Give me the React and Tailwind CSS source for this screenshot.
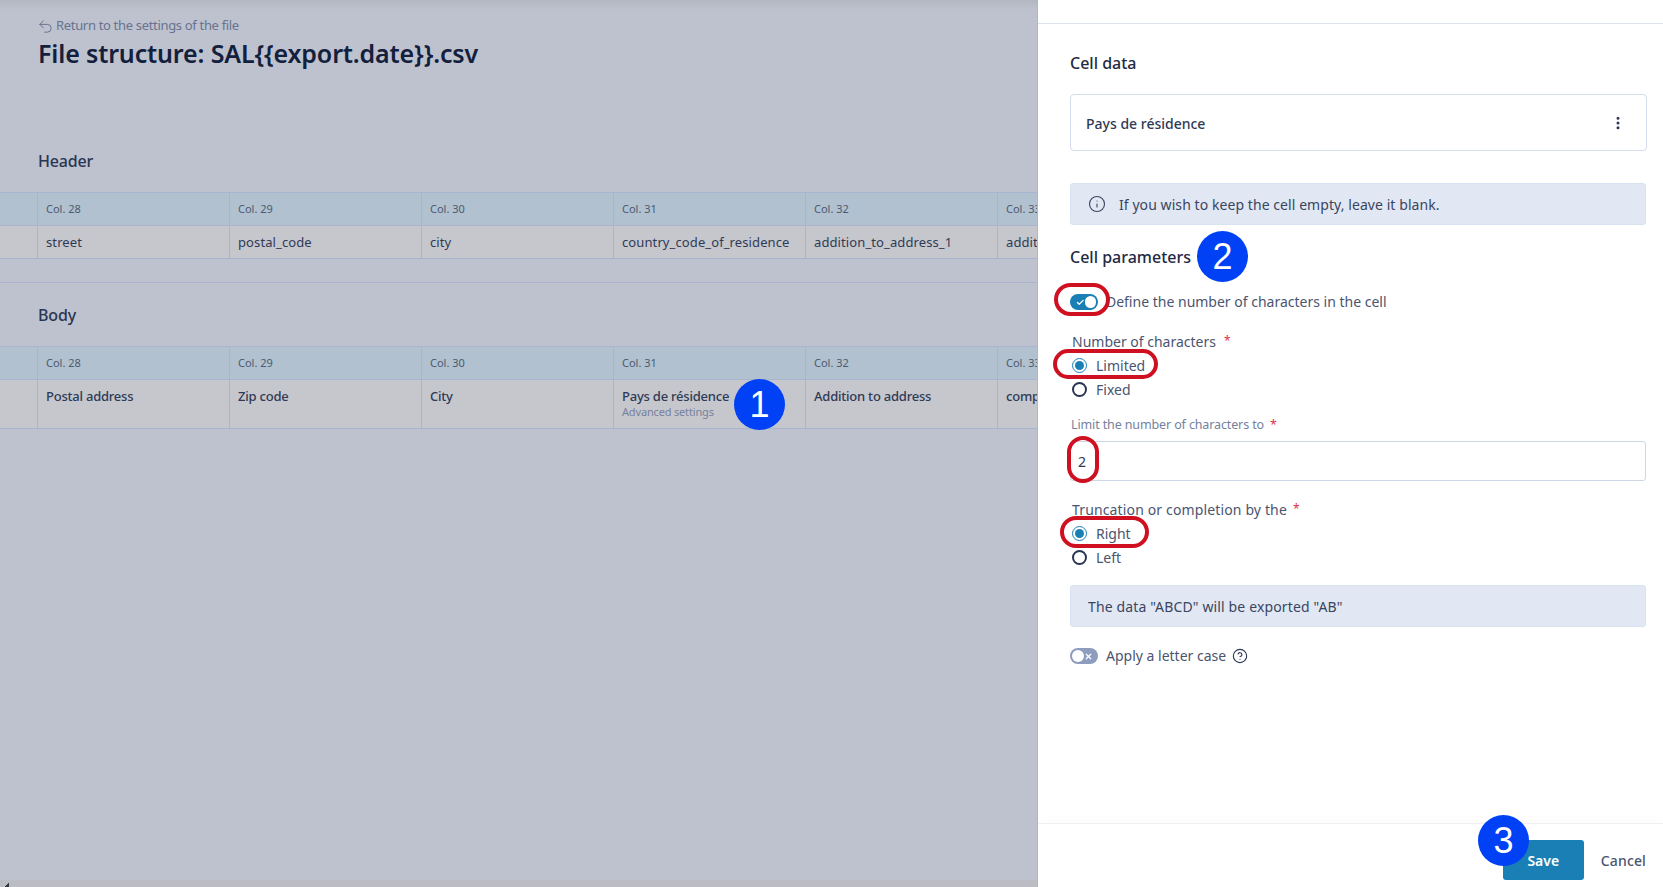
import React from "react";
import { Undo2, Info, EllipsisVertical, CircleHelp, Check, X } from "lucide-react";

const cols = ["Col. 28", "Col. 29", "Col. 30", "Col. 31", "Col. 32", "Col. 33"];

function Marker({ n, className }) {
  return (
    <div className={`absolute z-20 flex h-[51px] w-[51px] items-center justify-center rounded-full bg-[#0041f5] font-['Liberation_Sans'] text-[36px] leading-none text-white ${className}`}>
      {n}
    </div>
  );
}

function Ring({ className }) {
  return <div className={`absolute z-10 rounded-full border-[4px] border-[#cf1020] ${className}`} />;
}

function Table({ cells, tall }) {
  return (
    <div className="grid grid-cols-[37px_repeat(6,192px)] overflow-hidden">
      <div className="h-[34px] border-y border-[#a9b5cf] bg-[#b1c1cf]" />
      {cols.map((c) => (
        <div key={c} className="flex h-[34px] items-center border-y border-l border-[#a9b5cf] bg-[#b1c1cf] pl-[8px] text-[11px] whitespace-nowrap text-[#4d5a70]">
          {c}
        </div>
      ))}
      <div className={`${tall ? "h-[49px]" : "h-[33px]"} border-b border-[#a9b5cf] bg-[#c6c7cd]`} />
      {cells.map((c, i) => (
        <div key={i} className={`${tall ? "h-[49px] pt-[7px] font-medium tracking-[-0.017em]" : "flex h-[33px] items-center pt-[1px] tracking-[0.008em]"} overflow-hidden border-b border-l border-[#a9b5cf] bg-[#c6c7cd] pl-[8px] text-[13px] whitespace-nowrap text-[#2f3a55]`}>
          <div className={tall ? "leading-[18px]" : ""}>{c.a}</div>
          {c.b && <div className="text-[11px] leading-[13px] font-normal tracking-[-0.015em] text-[#76819d]">{c.b}</div>}
        </div>
      ))}
    </div>
  );
}

function Radio({ label, on }) {
  return (
    <div className="flex h-[24px] items-center gap-[9px] text-[14px] text-[#4a5570]">
      <div className="ml-[2px]">
        {on ? (
          <div className="flex h-[15px] w-[15px] items-center justify-center rounded-full border-[1.5px] border-[#1a7fb5]">
            <div className="h-[9px] w-[9px] rounded-full bg-[#1a7fb5]" />
          </div>
        ) : (
          <div className="h-[15px] w-[15px] rounded-full border-[2px] border-[#2a3553]" />
        )}
      </div>
      <span>{label}</span>
    </div>
  );
}

function Req({ label, ml, wide }) {
  return (
    <div className={`flex h-[20px] -translate-y-px items-center pl-[2px] text-[14px] text-[#4a5570] ${wide ? "tracking-[0.01em]" : ""}`}>
      <span>{label}</span>
      <span className={`${ml} text-[12px] text-[#e0304a]`}>*</span>
    </div>
  );
}

export default function App() {
  return (
    <div className="relative flex h-[887px] w-[1663px] overflow-hidden bg-white font-['Noto_Sans',sans-serif]">
      <div className="relative h-full w-[1038px] shrink-0 overflow-hidden border-r border-[#b3b6c0] bg-[#bdc2ce]">
        <div className="absolute inset-x-0 top-0 h-[10px] bg-linear-to-b from-[#b4b7c2] to-transparent" />
        <div className="pl-[38px]">
          <div className="-ml-px flex h-[18px] translate-y-[17px] items-center gap-[2px] text-[13px] tracking-[-0.025em] text-[#68738f]">
            <Undo2 size={17} strokeWidth={1.4} />
            <span>Return to the settings of the file</span>
          </div>
          <div className="mt-[17px] h-[36px] text-[25px] leading-[36px] font-semibold tracking-[-0.006em] whitespace-nowrap text-[#13203d]">
            File structure: SAL{"{{"}export.date{"}}"}.csv
          </div>
          <div className="mt-[78px] h-[24px] text-[16px] leading-[24px] font-medium tracking-[-0.01em] text-[#2a3553]">Header</div>
        </div>
        <div className="mt-[19px]">
          <Table cells={[{ a: "street" }, { a: "postal_code" }, { a: "city" }, { a: "country_code_of_residence" }, { a: "addition_to_address_1" }, { a: "addition_to_address_2" }]} />
        </div>
        <div className="mt-[23px] h-px bg-[#a9b5cf]" />
        <div className="mt-[20px] h-[24px] pl-[38px] text-[16px] leading-[24px] font-medium tracking-[-0.01em] text-[#2a3553]">Body</div>
        <div className="mt-[19px]">
          <Table tall cells={[{ a: "Postal address" }, { a: "Zip code" }, { a: "City" }, { a: "Pays de résidence", b: "Advanced settings" }, { a: "Addition to address" }, { a: "complement" }]} />
        </div>
        <div className="absolute inset-x-0 bottom-0 h-[7px] bg-[#bbbcc4]" />
        <svg className="absolute bottom-0 left-[5px]" width="4" height="4" viewBox="0 0 4 4">
          <path d="M3 0h1v4H0V3h1V2h1V1h1z" fill="#333845" />
        </svg>
      </div>

      <div className="flex h-full w-[625px] shrink-0 flex-col bg-white">
        <div className="h-[24px] shrink-0 border-b border-[#dde3ee]" />
        <div className="flex-1 pr-[17px] pl-[32px]">
          <div className="mt-[27px] h-[24px] text-[16px] leading-[24px] font-medium text-[#1f2a44]">Cell data</div>
          <div className="mt-[19px] -mr-px flex h-[57px] items-center justify-between rounded-[4px] border border-[#d5dcec] pr-[20px] pl-[15px] text-[14px] font-medium text-[#2f3a55]">
            <span className="translate-y-px">Pays de résidence</span>
            <EllipsisVertical size={16} strokeWidth={2.5} className="text-[#2a3553]" />
          </div>
          <div className="mt-[32px] flex h-[42px] items-center gap-[13px] rounded-[3px] border border-[#d9e2f1] bg-[#e1e8f4] pl-[17px] text-[14px] tracking-[0.005em] text-[#3a4560]">
            <Info size={18} strokeWidth={1.5} />
            <span>If you wish to keep the cell empty, leave it blank.</span>
          </div>
          <div className="mt-[20px] h-[24px] text-[16px] leading-[24px] font-medium text-[#1f2a44]">Cell parameters</div>
          <div className="mt-[25px] flex h-[16px] items-center gap-[8px] text-[14px] text-[#4a5570]">
            <div className="flex h-[16px] w-[28px] items-center justify-between rounded-full bg-[#1a7fb5] pr-[2px] pl-[6px]">
              <Check size={9} strokeWidth={3.5} className="text-white" />
              <div className="h-[12px] w-[12px] rounded-full bg-white" />
            </div>
            <span className="-translate-y-px">Define the number of characters in the cell</span>
          </div>
          <div className="mt-[22px]"><Req label="Number of characters" ml="ml-[8px]" /></div>
          <div className="mt-[1px]">
            <Radio label="Limited" on />
            <Radio label="Fixed" />
          </div>
          <div className="mt-[15px] flex h-[18px] items-center pl-[1px] text-[12.5px] tracking-[-0.01em] text-[#76819d]">
            <span>Limit the number of characters to</span>
            <span className="ml-[6px] text-[#e0304a]">*</span>
          </div>
          <div className="mt-[7px] flex h-[40px] items-center rounded-[3px] border border-[#cfd6e6] pl-[7px] text-[14px] text-[#2f3a55]">2</div>
          <div className="mt-[19px]"><Req label="Truncation or completion by the" ml="ml-[6px]" wide /></div>
          <div className="mt-[1px]"><Radio label="Right" on /></div>
          <Radio label="Left" />
          <div className="mt-[16px] flex h-[42px] items-center rounded-[3px] border border-[#d9e2f1] bg-[#e1e8f4] pl-[17px] text-[14px] tracking-[0.01em] text-[#3a4560]">
            The data "ABCD" will be exported "AB"
          </div>
          <div className="mt-[21px] flex h-[16px] items-center gap-[8px] text-[14px] text-[#4a5570]">
            <div className="flex h-[16px] w-[28px] items-center justify-between rounded-full bg-[#8e9cbd] pr-[5px] pl-[2px]">
              <div className="h-[12px] w-[12px] rounded-full bg-white" />
              <X size={9} strokeWidth={3.5} className="text-white" />
            </div>
            <span className="-translate-y-px">Apply a letter case</span>
            <CircleHelp size={16} strokeWidth={1.7} className="-ml-[2px] text-[#2f3a55]" />
          </div>
        </div>
        <div className="flex h-[64px] shrink-0 items-start justify-end gap-[17px] border-t border-[#eef0f4] pt-[16px] pr-[17px] shadow-[0_-6px_10px_rgba(0,0,0,0.012)]">
          <div className="flex h-[40px] w-[81px] items-center justify-center rounded-[3px] bg-[#1a7fb5] text-[14px] font-semibold text-white">Save</div>
          <div className="flex h-[40px] items-center text-[14px] font-medium tracking-[0.01em] text-[#4a5570]">Cancel</div>
        </div>
      </div>

      <Marker n="1" className="top-[379px] left-[734px]" />
      <Marker n="2" className="top-[231px] left-[1197px]" />
      <Marker n="3" className="top-[815px] left-[1478px]" />
      <Ring className="top-[283px] left-[1054px] h-[33px] w-[56px]" />
      <Ring className="top-[349px] left-[1053px] h-[30px] w-[105px]" />
      <Ring className="top-[436px] left-[1067px] h-[47px] w-[32px]" />
      <Ring className="top-[516px] left-[1060px] h-[32px] w-[89px]" />
    </div>
  );
}
